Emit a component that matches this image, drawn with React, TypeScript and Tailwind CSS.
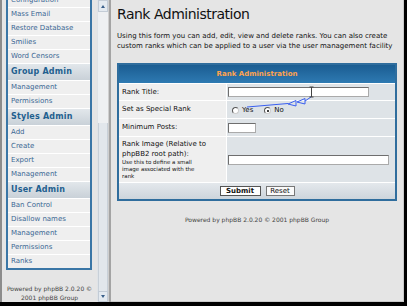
import { type ReactNode } from "react";

const FONT = "font-['DejaVu_Sans',Verdana,sans-serif]";

type NavRow = { label: string; header?: boolean };

const NAV: NavRow[] = [
  { label: "Configuration" },
  { label: "Mass Email" },
  { label: "Restore Database" },
  { label: "Smilies" },
  { label: "Word Censors" },
  { label: "Group Admin", header: true },
  { label: "Management" },
  { label: "Permissions" },
  { label: "Styles Admin", header: true },
  { label: "Add" },
  { label: "Create" },
  { label: "Export" },
  { label: "Management" },
  { label: "User Admin", header: true },
  { label: "Ban Control" },
  { label: "Disallow names" },
  { label: "Management" },
  { label: "Permissions" },
  { label: "Ranks" },
];

function Scrollbar() {
  return (
    <div className="flex w-[11px] flex-col bg-[#eef0f2] border-l border-[#dfe3e7]">
      <div className="flex h-[12px] items-center justify-center border border-[#c3ccd6] bg-[#e4eaf0]">
        <span className="h-0 w-0 border-x-[2.5px] border-b-[3px] border-x-transparent border-b-[#3a5f8a]" />
      </div>
      <div className="mt-[111px] flex-1 border-x border-[#c8d0d8] bg-[#e2e7ec]" />
      <div className="flex h-[11px] items-center justify-center border border-[#c3ccd6] bg-[#e4eaf0]">
        <span className="h-0 w-0 border-x-[2.5px] border-t-[3px] border-x-transparent border-t-[#3a5f8a]" />
      </div>
    </div>
  );
}

function LeftFrame() {
  return (
    <div className="flex w-[108px] border-l-2 border-[#8c8c8c] bg-[#e5e5e5]">
      <div className="w-[95px] overflow-hidden">
        <div className="-mt-[6px] ml-[4px] w-[86px] border-x-2 border-b-2 border-[#3a76a6] bg-white">
          <div className="flex flex-col gap-px">
            {NAV.map((row, i) =>
              row.header ? (
                <div
                  key={i}
                  className="flex h-[16px] items-center bg-gradient-to-b from-[#e2e7eb] to-[#c9d1d8] pl-[3px] text-[8px] font-bold tracking-[0.2px] text-[#1f5f8f]"
                >
                  {row.label}
                </div>
              ) : (
                <div key={i} className="flex h-[13px] items-center bg-[#efefef] pl-[3px] text-[7px] text-[#3b6794]">
                  {row.label}
                </div>
              ),
            )}
          </div>
        </div>
        <p className="mt-[14px] text-center text-[6px] leading-[9px] text-[#444]">
          Powered by phpBB 2.0.20 ©<br />2001 phpBB Group
        </p>
      </div>
      <Scrollbar />
    </div>
  );
}

function Radio({ checked, label }: { checked?: boolean; label: string }) {
  return (
    <span className="flex items-center gap-[3px]">
      <span className="flex h-[7px] w-[7px] items-center justify-center rounded-full border border-t-[#555] border-l-[#555] border-r-[#ccc] border-b-[#ccc] bg-white">
        {checked && <span className="h-[2px] w-[2px] rounded-full bg-black" />}
      </span>
      <span>{label}</span>
    </span>
  );
}

function Label({ children, tall }: { children: ReactNode; tall?: boolean }) {
  return (
    <div className={`flex bg-[#efefef] pl-[3px] ${tall ? "flex-col justify-center" : "items-center"}`}>
      {children}
    </div>
  );
}

function Cell({ h, children }: { h: string; children: ReactNode }) {
  return <div className={`flex ${h} items-center bg-[#dee3e7] pl-[1px]`}>{children}</div>;
}

function Field({ w }: { w: string }) {
  return <input readOnly className={`h-[10px] ${w} border border-[#6e6e6e] border-r-[#aaa] border-b-[#aaa] bg-white`} />;
}

function Annotation() {
  return (
    <svg className="pointer-events-none absolute left-0 top-0" width="407" height="306" viewBox="0 0 407 306">
      <g fill="none" stroke="#3a5ff0" strokeWidth="1">
        <polyline points="247,107 288,103.5" />
        <polygon points="288,104 296,100.5 296,106" />
        <polygon points="297,102 305,98.5 305,104" />
        <polyline points="305,101 311,97" />
      </g>
      <g stroke="#444" strokeWidth="1" fill="none">
        <line x1="311.5" y1="87" x2="311.5" y2="97" />
        <line x1="309.5" y1="87" x2="313.5" y2="87" />
        <line x1="309.5" y1="97" x2="313.5" y2="97" />
      </g>
    </svg>
  );
}

function RightFrame() {
  return (
    <div className="flex-1 border-r border-b border-[#c9c9c9] bg-[#e5e5e5] pl-[6px] text-[#111]">
      <h1 className="mt-[5px] text-[14px] leading-[18px] tracking-[-0.5px]">Rank Administration</h1>
      <p className="mt-[8px] w-[284px] text-[7px] leading-[10px]">
        Using this form you can add, edit, view and delete ranks. You can also create custom ranks which can be applied to a user via the user management facility
      </p>
      <div className="mt-[12px] w-[280px] border-2 border-[#2f6d9d] bg-white">
        <div className="grid grid-cols-[107px_1fr] gap-px text-[7px]">
          <div className="col-span-2 flex h-[18px] items-center justify-center bg-gradient-to-b from-[#1b5d92] to-[#2e7ab2] text-[7px] font-bold text-[#ffa34f]">
            Rank Administration
          </div>
          <Label>Rank Title:</Label>
          <Cell h="h-[16px]">
            <Field w="w-[141px]" />
          </Cell>
          <Label>Set as Special Rank</Label>
          <Cell h="h-[17px]">
            <div className="flex items-center gap-[11px] pl-[4px] pt-[2px]">
              <Radio label="Yes" />
              <Radio checked label="No" />
            </div>
          </Cell>
          <Label>Minimum Posts:</Label>
          <Cell h="h-[17px]">
            <Field w="w-[28px]" />
          </Cell>
          <Label tall>
            <span className="leading-[10px]">Rank Image (Relative to</span>
            <span className="leading-[10px]">phpBB2 root path):</span>
            <span className="text-[5.5px] leading-[7px]">
              Use this to define a small
              <br />
              image associated with the
              <br />
              rank
            </span>
          </Label>
          <Cell h="h-[45px]">
            <Field w="w-[161px]" />
          </Cell>
          <div className="col-span-2 flex h-[16px] items-center justify-center gap-[5px] bg-gradient-to-b from-[#e4e8ec] to-[#cdd5dc]">
            <button className="h-[10px] w-[41px] border border-[#555] bg-white text-[7px] font-bold leading-none">Submit</button>
            <button className="h-[10px] w-[29px] border border-[#777] bg-[#fafafa] text-[7px] leading-none">Reset</button>
          </div>
        </div>
      </div>
      <p className="mt-[14px] w-[280px] text-center text-[6px] text-[#444]">Powered by phpBB 2.0.20 © 2001 phpBB Group</p>
    </div>
  );
}

export default function App() {
  return (
    <div className={`relative h-[306px] w-[407px] overflow-hidden bg-black ${FONT}`}>
      <div className="flex h-[302px] w-[404px]">
        <LeftFrame />
        <div className="w-[3px] border-l border-[#cfcfcf] bg-[#a4a4a4]" />
        <RightFrame />
      </div>
      <Annotation />
    </div>
  );
}
